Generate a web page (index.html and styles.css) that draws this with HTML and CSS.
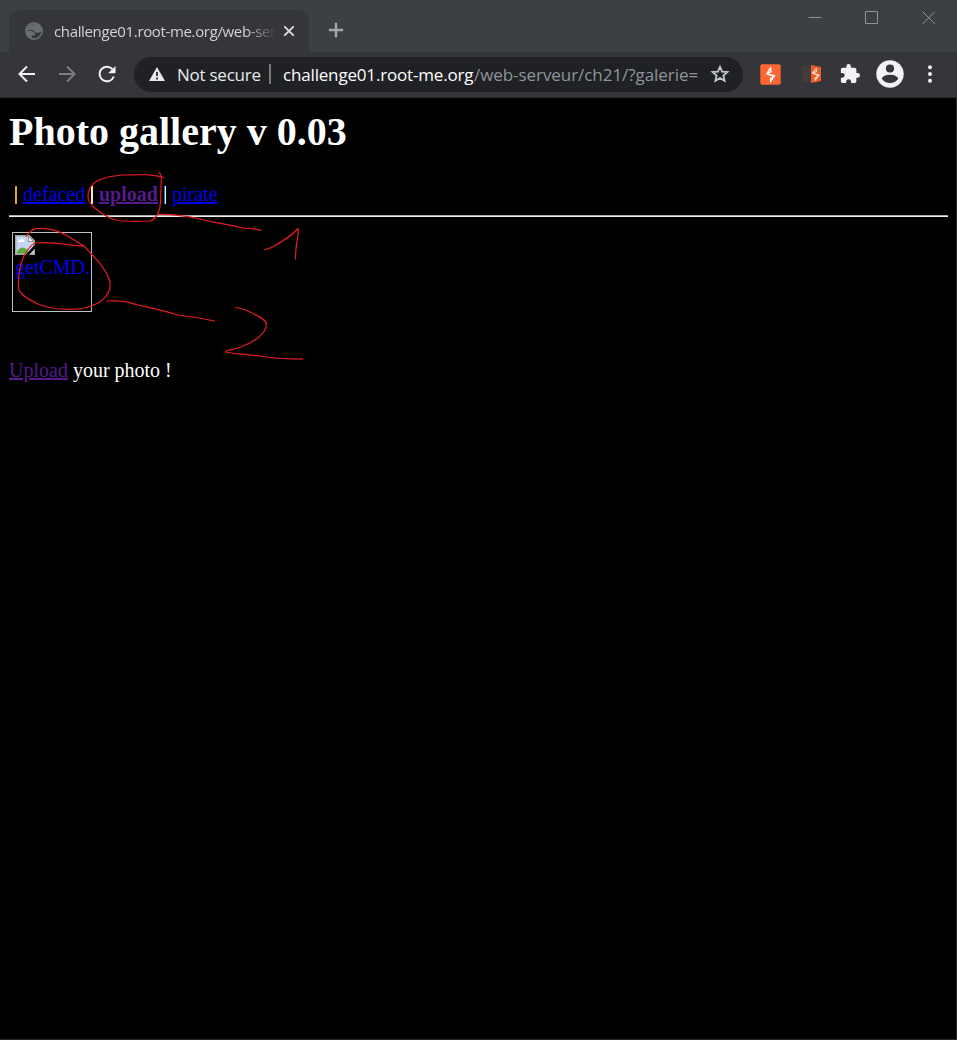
FILE: index.html
```html
<!DOCTYPE html>
<html lang="en">
<head>
<meta charset="utf-8">
<title>challenge01.root-me.org</title>
<link rel="stylesheet" href="styles.css">
</head>
<body>
<div class="window">
  <header class="tabstrip">
    <div class="tab">
      <svg class="globe" width="20" height="20" viewBox="0 0 20 20"><circle cx="10" cy="10" r="9" fill="#696c70"/><path d="M10.500 2.800C9.500 3.500 9.200 4.300 9.200 5.500 7.200 5.600 6.300 7 6.600 9.300H10c0 1.700 1 2.500 3 2.500 1.600 0 2.700-.5 4.200-1.500C17 14.500 13.500 17.300 10 17.200l-2.200-.4v-2.300h3.100c.3-3.100-1-4.600-4.100-4.600H2.800C2.900 5.500 6.500 2.500 10.500 2.800z" fill="#35363a"/><path d="M3 9.600C3 5.800 6 3 10 2.800 9.300 3.500 9.200 4.500 9.200 5.500 7.200 5.600 6.300 7 6.600 9.300z" fill="#696c70"/></svg>
      <span class="tab-title">challenge01.root-me.org/web-serveur</span>
      <svg class="tab-close" width="12" height="12" viewBox="0 0 12 12"><path d="M1.300 1.300l9.400 9.400M10.700 1.300l-9.400 9.400" stroke="#dadce0" stroke-width="1.900"/></svg>
    </div>
    <svg class="newtab" width="16" height="16" viewBox="0 0 16 16"><path d="M8 .8v14.400M.8 8h14.400" stroke="#a5a7aa" stroke-width="2.400"/></svg>
    <div class="controls">
      <svg width="14" height="14" viewBox="0 0 14 14"><path d="M.5 6.500h13" stroke="#8f9294"/></svg>
      <svg width="14" height="14" viewBox="0 0 14 14"><path d="M.5 .5h12v12H.5z" fill="none" stroke="#8f9294"/></svg>
      <svg width="14" height="14" viewBox="0 0 14 14"><path d="M.5 .5l12.500 12.500M13 .5L.5 13" stroke="#8f9294"/></svg>
    </div>
  </header>
  <nav class="toolbar">
    <svg class="back" width="18" height="18" viewBox="0 0 18 18"><path d="M17 9H2M9 1.500L1.500 9 9 16.500" fill="none" stroke="#f1f3f4" stroke-width="2"/></svg>
    <svg class="forward" width="18" height="18" viewBox="0 0 18 18"><path d="M1 9h15M9 1.500L16.500 9 9 16.500" fill="none" stroke="#7c7d80" stroke-width="2"/></svg>
    <svg class="reload" width="20" height="18" viewBox="0 0 20 18"><path d="M16.800 11.500A7.300 7.300 0 1 1 15.300 4" fill="none" stroke="#f1f3f4" stroke-width="2"/><path d="M18.500 1v7.300h-7.300z" fill="#f1f3f4"/></svg>
    <div class="omnibox">
      <svg class="warning" width="16" height="14" viewBox="0 0 16 14"><path d="M8 0l8 14H0z" fill="#e8eaed"/><path d="M8 5v4M8 10.500v2" stroke="#202124" stroke-width="1.700"/></svg>
      <span class="security">Not secure</span>
      <i class="divider"></i>
      <span class="host">challenge01.root-me.org</span><span class="path">/web-serveur/ch21/?galerie=</span>
      <svg class="star" width="20" height="20" viewBox="0 0 20 20"><path d="M10 2.800l2.100 4.900 5.300.4-4 3.500 1.200 5.200-4.600-2.800-4.600 2.800 1.200-5.200-4-3.500 5.300-.4z" fill="none" stroke="#c4c7ca" stroke-width="1.800"/></svg>
    </div>
    <svg class="burp" width="21" height="21" viewBox="0 0 21 21"><rect x=".3" y=".3" width="20.400" height="20.400" rx="2" fill="#ff6633"/><path d="M10.800 3.200L6.800 9.800l6.400 2.400-2.600 5.300M10.800 3.200v4.600L8 9.200M7.500 10l6.800 1.700-3.700 5.800v-4" fill="none" stroke="#fff" stroke-width="1.300"/></svg>
    <svg class="burp-dim" width="21" height="18" viewBox="0 0 21 18"><path d="M1 2l9-2v18l-9-2z" fill="#403d3b"/><path d="M10 0l10 2v14l-10 2z" fill="#f05a28"/><path d="M15.500 3l-4 5.200 5 1.700-2 5.500M15.500 3v3.500L12.500 8M13 9l5 1-3.800 5v-3" fill="none" stroke="#ffd9cc" stroke-width="1.200"/></svg>
    <svg class="puzzle" width="20" height="20" viewBox="1 1 22 22"><path fill="#f1f3f4" d="M20.500 11H19V7c0-1.100-.9-2-2-2h-4V3.500a2.500 2.500 0 0 0-5 0V5H4c-1.100 0-1.990.9-1.990 2v3.800H3.500a2.700 2.700 0 0 1 0 5.400H2V20c0 1.100.9 2 2 2h3.800v-1.500a2.700 2.700 0 0 1 5.400 0V22H17c1.100 0 2-.9 2-2v-4h1.500a2.500 2.500 0 0 0 0-5z"/></svg>
    <svg class="avatar" width="28" height="28" viewBox="0 0 28 28"><circle cx="14" cy="14" r="13.700" fill="#f1f3f4"/><circle cx="14" cy="8.500" r="4.100" fill="#35363a"/><path d="M5.700 18.800c2-5.300 14.600-5.300 16.600 0-3.800 5.700-12.800 5.700-16.600 0z" fill="#35363a"/></svg>
    <svg class="menu" width="4" height="18" viewBox="0 0 4 18"><g fill="#f1f3f4"><circle cx="2" cy="2.200" r="2"/><circle cx="2" cy="9" r="2"/><circle cx="2" cy="15.800" r="2"/></g></svg>
  </nav>
  <main class="page">
    <h1 class="title">Photo gallery v 0.03</h1>
    <div class="links"><i class="bar amber"></i><a class="link first">defaced</a><i class="bar cream"></i><a class="link visited current">upload</a><i class="bar blue"></i><a class="link last">pirate</a></div>
    <div class="rule"></div>
    <div class="photo">
      <svg class="broken" width="20" height="20" viewBox="0 0 20 20"><path d="M.7 .7h13.600l5 5v13.600H.7z" fill="#c5d6f4" stroke="#a5a5a5" stroke-width="1.400"/><path d="M3 7c0-2 2-2 2.500-2 .5-2 3-1.500 3 0 1.500 0 1.500 2 .5 2z" fill="#fff"/><path d="M1.400 18.600c2-8 10-8 13 0z" fill="#59ad35"/><path d="M13.500 1v5.500H19z" fill="#fff" stroke="#999" stroke-width="1.200"/><path d="M20 9.500L10.500 20h3.300L20 13.500z" fill="#000"/></svg>
      <div class="photo-name">getCMD.php</div>
    </div>
    <p class="upload"><a class="visited">Upload</a> your photo !</p>
  </main>
  <svg class="ink" width="957" height="1040" viewBox="0 0 957 1040">
    <path d="M163.500 177.500C156 175 149 175 145 174.500C135 175 130 174.500 122 175C112 176 105 177 99 180C90 185 88 190 88 197C88 202 91 205 96 209C102 214 108 218 116 220C126 222 140 221.500 150 221C156 219 160 212 160.500 203C161 195 161 180 161.500 177C161 174 160 173 159 172.500"/>
    <path d="M158 214.500C174 214 186 216 200 219C214 223 228 224 243 228Q252 228 261 230.500"/>
    <path d="M264.500 249.500Q270 249 276 245C287 238 293 235 298 228.500C300 232 295 244 295.500 259"/>
    <path d="M26 236.500Q32 228 39 228.500C60 228 70 238 84 246C94 257 105 267 109 279C112 287 109 295 100 302C92 306 86 309 75 309C60 310 48 308 38 304C28 299 19 294 18.500 288C18 276 20 264 24 256Q29 246 35 243C52 241 70 246 84 246"/>
    <path d="M107 301C123 300 128 302 138 305C151 308 165 311 178 315Q196 317 214.500 321"/>
    <path d="M235.500 307.500Q242 308 253 313.500C260 317 266 320 266.500 324C266 334 254 342 243 346C235 350 224 350 226 352C232 354 249 354 266 357C280 359 291 359 303 359"/>
  </svg>
</div>
</body>
</html>
```
FILE: styles.css
```css
* { box-sizing: border-box; }
body { margin: 0; background: #000; }
svg { display: block; flex: none; }
.window { position: relative; width: 957px; height: 1040px; overflow: hidden; display: flex; flex-direction: column; font-family: "Open Sans", "Noto Sans", sans-serif; }
.tabstrip { height: 52px; flex: none; background: #3c4043; display: flex; align-items: flex-start; padding: 10px 21px 0 9px; }
.tab { width: 300px; height: 42px; flex: none; background: #35363a; border-radius: 10px 10px 0 0; display: flex; align-items: center; padding: 0 14px 0 15px; }
.tab-title { width: 222px; margin-left: 10px; flex: none; overflow: hidden; white-space: nowrap; color: #d0d2d5; font-size: 15px; line-height: 24px; letter-spacing: -.35px; -webkit-mask-image: linear-gradient(90deg, #000 192px, transparent 222px); mask-image: linear-gradient(90deg, #000 192px, transparent 222px); }
.tab-close { margin-left: 7px; }
.newtab { margin: 12px 0 0 19px; }
.controls { margin-left: auto; padding-top: 1px; display: flex; gap: 43px; }
.toolbar { height: 46px; flex: none; background: #35363a; border-bottom: 1px solid #292a2d; display: flex; align-items: center; padding: 0 0 1px 18px; }
.forward { margin-left: 22px; }
.reload { margin-left: 21px; }
.omnibox { width: 609px; height: 35px; margin-left: 17px; flex: none; border-radius: 18px; background: #202124; display: flex; align-items: center; white-space: nowrap; font-size: 17px; }
.warning { margin-left: 15px; }
.security { width: 83px; margin-left: 12px; color: #e8eaed; letter-spacing: -.25px; }
.divider { width: 2px; height: 20px; margin: 0 12px 0 9px; background: #77797c; }
.host { width: 191px; color: #fff; letter-spacing: -.17px; }
.path { width: 224px; color: #8f9499; letter-spacing: -.06px; }
.star { margin-left: 12px; }
.burp { margin-left: 17px; }
.burp-dim { margin-left: 20px; }
.puzzle { margin-left: 18px; }
.avatar { margin-left: 16px; }
.menu { margin-left: 24px; }
.page { flex: 1; background: #000; border: solid #292a2d; border-width: 0 1px 1px 0; padding: 11px 8px 0 9px; color: #fff; font: 20px/23px "Liberation Serif", serif; }
.title { margin: 0; font-size: 40px; line-height: 46px; }
.links { height: 23px; margin-top: 28px; padding-left: 6px; display: flex; align-items: center; }
.link { color: #00e; text-decoration: underline; white-space: nowrap; }
.bar { width: 2px; height: 18px; background: #e0a52c; }
.cream { background: #fbe5b5; }
.blue { background: linear-gradient(90deg, #087bd0 1px, #e8f5ff 1px); }
.first { width: 62px; margin: 0 6px; }
.current { width: 59px; margin: 0 6px; font-weight: bold; }
.last { margin-left: 6px; }
.visited { color: #551a8b; text-decoration: underline; }
.rule { height: 2px; margin-top: 9px; background: linear-gradient(#a9a9a9 1px, #eee 1px); }
.photo { width: 80px; height: 80px; margin: 15px 0 0 3px; border: 1px solid #c0c0c0; padding: 2px 0 2px 2px; overflow: hidden; color: #00e; }
.photo-name { width: 76px; margin-top: 1px; overflow: hidden; white-space: nowrap; }
.upload { margin: 47px 0 0; }
.ink { position: absolute; left: 0; top: 0; fill: none; stroke: #e31b23; stroke-width: 1.250; stroke-linecap: round; stroke-linejoin: round; }
```
